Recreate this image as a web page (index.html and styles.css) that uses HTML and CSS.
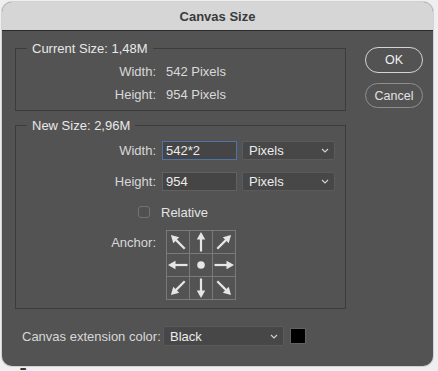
FILE: index.html
```html
<!DOCTYPE html>
<html>
<head>
<meta charset="utf-8">
<link rel="stylesheet" href="styles.css">
</head>
<body>
<div class="dialog">
  <div class="titlebar">Canvas Size</div>
  <div class="content">
    <div class="main">
      <fieldset class="group current">
        <legend>Current Size: 1,48M</legend>
        <div class="info-row"><span class="lbl">Width:</span><span class="val">542 Pixels</span></div>
        <div class="info-row"><span class="lbl">Height:</span><span class="val">954 Pixels</span></div>
      </fieldset>
      <fieldset class="group new">
        <legend>New Size: 2,96M</legend>
        <div class="form-row first">
          <span class="lbl">Width:</span>
          <div class="input focus">542*2</div>
          <div class="select unit">Pixels<svg class="chev" width="8" height="5" viewBox="0 0 8 5"><path d="M1 1 L4 4 L7 1" fill="none" stroke="#cfcfcf" stroke-width="1.2"/></svg></div>
        </div>
        <div class="form-row">
          <span class="lbl">Height:</span>
          <div class="input">954</div>
          <div class="select unit">Pixels<svg class="chev" width="8" height="5" viewBox="0 0 8 5"><path d="M1 1 L4 4 L7 1" fill="none" stroke="#cfcfcf" stroke-width="1.2"/></svg></div>
        </div>
        <div class="relative-row"><span class="check"></span><span>Relative</span></div>
        <div class="anchor-row">
          <span class="lbl anchor-lbl">Anchor:</span>
          <svg class="anchor" width="70" height="70" viewBox="0 0 70 70">
            <defs>
              <g id="arr">
                <polygon points="0,-10 4.2,-2.5 -4.2,-2.5" fill="#e6e6e6"/>
                <rect x="-1.1" y="-3" width="2.2" height="12.5" fill="#e6e6e6"/>
              </g>
            </defs>
            <g stroke="#7a7a7a" stroke-width="1" fill="none">
              <rect x="0.5" y="0.5" width="69" height="69"/>
              <line x1="23.5" y1="0" x2="23.5" y2="70"/>
              <line x1="46.5" y1="0" x2="46.5" y2="70"/>
              <line x1="0" y1="23.5" x2="70" y2="23.5"/>
              <line x1="0" y1="46.5" x2="70" y2="46.5"/>
            </g>
            <g transform="translate(12 12) rotate(-45)"><use href="#arr"/></g>
            <g transform="translate(35 12)"><use href="#arr"/></g>
            <g transform="translate(58 12) rotate(45)"><use href="#arr"/></g>
            <g transform="translate(12 35) rotate(-90)"><use href="#arr"/></g>
            <circle cx="35" cy="35" r="3.8" fill="#e6e6e6"/>
            <g transform="translate(58 35) rotate(90)"><use href="#arr"/></g>
            <g transform="translate(12 58) rotate(-135)"><use href="#arr"/></g>
            <g transform="translate(35 58) rotate(180)"><use href="#arr"/></g>
            <g transform="translate(58 58) rotate(135)"><use href="#arr"/></g>
          </svg>
        </div>
      </fieldset>
      <div class="ext-row">
        <span class="ext-lbl">Canvas extension color:</span>
        <div class="select ext">Black<svg class="chev" width="8" height="5" viewBox="0 0 8 5"><path d="M1 1 L4 4 L7 1" fill="none" stroke="#cfcfcf" stroke-width="1.2"/></svg></div>
        <span class="swatch"></span>
      </div>
    </div>
    <div class="buttons">
      <div class="btn ok">OK</div>
      <div class="btn cancel">Cancel</div>
    </div>
  </div>
</div>
<div class="dots">•••</div>
</body>
</html>
```

FILE: styles.css
```css
body {
  margin: 0;
  background: #efefef;
  font-family: "Liberation Sans", Arial, sans-serif;
  font-size: 13px;
  width: 438px;
  height: 371px;
  overflow: hidden;
}

.dialog {
  margin: 2px 0 0 2px;
  width: 431px;
  height: 364px;
  background: #535353;
  border-radius: 10px;
  overflow: hidden;
  display: flex;
  flex-direction: column;
  box-shadow: 0 0 0 1px rgba(0, 0, 0, 0.12);
}

.titlebar {
  height: 28px;
  flex: none;
  border-bottom: 1px solid #2b2b2b;
  background: #d6d6d6;
  color: #3a3a3a;
  font-weight: bold;
  font-size: 13px;
  display: flex;
  align-items: center;
  justify-content: center;
}

.content {
  display: flex;
  flex: 1;
  padding: 0 10px 0 13px;
}

.main {
  width: 331px;
  display: flex;
  flex-direction: column;
}

.group {
  margin: 0;
  padding: 0;
  border: 1px solid #3c3c3c;
  min-width: 0;
  box-sizing: border-box;
  width: 331px;
}

.group legend {
  margin-left: 11px;
  padding: 0 5px;
  font-size: 13px;
  line-height: 15px;
  color: #e8e8e8;
}

.current {
  margin-top: 10px;
  padding: 4px 0 4px;
}

.info-row {
  display: flex;
  align-items: center;
  height: 23px;
  color: #dadada;
}

.lbl {
  width: 140px;
  flex: none;
  text-align: right;
  color: #d8d8d8;
}

.info-row .val {
  margin-left: 10px;
}

.new {
  margin-top: 7px;
  padding: 0 0 8px;
}

.form-row {
  display: flex;
  align-items: center;
  margin-top: 12px;
}

.form-row.first {
  margin-top: 8px;
}

.form-row .lbl {
  margin-right: 6px;
}

.input {
  width: 75px;
  height: 19px;
  box-sizing: border-box;
  background: #454545;
  border: 1px solid #616161;
  color: #ececec;
  padding-left: 3px;
  line-height: 17px;
}

.input.focus {
  border-color: #4f72ab;
}

.select {
  display: flex;
  align-items: center;
  justify-content: space-between;
  box-sizing: border-box;
  background: #474747;
  border: 1px solid #5b5b5b;
  border-radius: 2px;
  color: #ececec;
  padding: 0 5px 0 6px;
}

.select.unit {
  width: 93px;
  height: 19px;
  margin-left: 5px;
}

.relative-row {
  display: flex;
  align-items: center;
  margin-top: 15px;
  padding-left: 122px;
  height: 12px;
  color: #e4e4e4;
}

.check {
  width: 12px;
  height: 12px;
  box-sizing: border-box;
  border: 1px solid #737373;
  border-radius: 3px;
  background: #505050;
  margin-right: 11px;
}

.anchor-row {
  display: flex;
  align-items: flex-start;
  margin-top: 12px;
}

.anchor-lbl {
  padding-top: 5px;
}

.anchor {
  display: block;
  margin-left: 10px;
}

.ext-row {
  display: flex;
  align-items: center;
  margin-top: 17px;
}

.ext-lbl {
  width: 134px;
  margin-left: 7px;
  white-space: nowrap;
  color: #d8d8d8;
}

.select.ext {
  width: 121px;
  height: 20px;
  margin-left: 7px;
}

.swatch {
  width: 16px;
  height: 16px;
  box-sizing: border-box;
  background: #000;
  border: 1px solid #626262;
  margin-left: 6px;
}

.buttons {
  margin-left: 19px;
  padding-top: 16px;
  display: flex;
  flex-direction: column;
  gap: 10px;
  width: 59px;
}

.btn {
  box-sizing: border-box;
  display: flex;
  align-items: center;
  justify-content: center;
  font-size: 12.5px;
  border-radius: 13px;
}

.btn.ok {
  height: 26px;
  border: 1.5px solid #d4d4d4;
  color: #f2f2f2;
}

.btn.cancel {
  height: 25px;
  border: 1px solid #8e8e8e;
  color: #e2e2e2;
}

.dots {
  margin-left: 20px;
  font-size: 8px;
  line-height: 5px;
  height: 5px;
  letter-spacing: -1px;
  color: #222;
}
```
